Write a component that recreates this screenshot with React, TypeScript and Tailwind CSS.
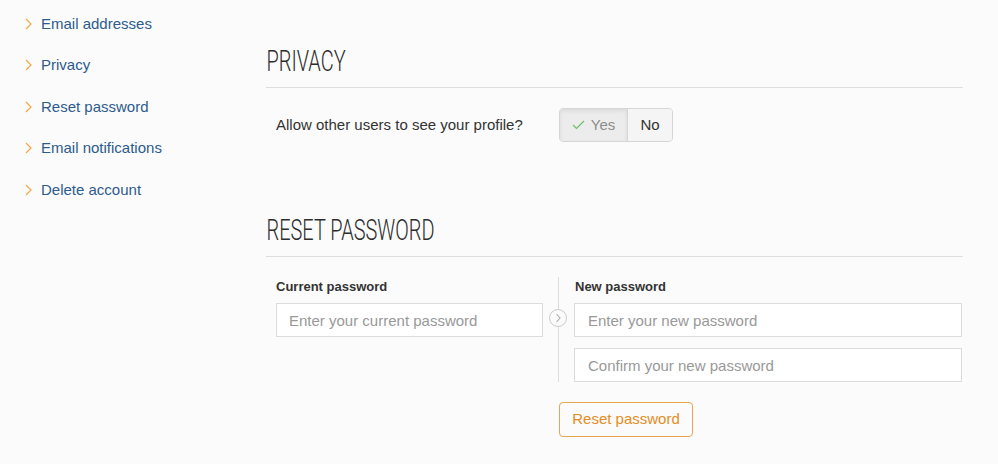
import React from "react";

const navItems = [
  "Email addresses",
  "Privacy",
  "Reset password",
  "Email notifications",
  "Delete account",
];

function Chevron({ className = "" }: { className?: string }) {
  return (
    <svg width="7" height="12" viewBox="0 0 7 12" className={className} fill="none">
      <polyline points="1,1 6,6 1,11" stroke="currentColor" strokeWidth="1.2" />
    </svg>
  );
}

function Heading({ children }: { children: React.ReactNode }) {
  return (
    <div className="border-b border-[#dedede] pb-[14px]">
      <h2
        className="block text-[30px] leading-[25px] h-[25px] font-light text-[#2e2e2e] uppercase whitespace-nowrap origin-left scale-x-[0.665] translate-x-[0.5px]"
        style={{ fontFamily: "Roboto, 'Liberation Sans', sans-serif" }}
      >
        {children}
      </h2>
    </div>
  );
}

export default function App() {
  return (
    <div
      className="min-h-[464px] w-[998px] bg-[#fbfbfb] flex text-[15px] text-[#333]"
      style={{ fontFamily: "'Liberation Sans', Arial, sans-serif" }}
    >
      <aside className="w-[266px] shrink-0 pl-[25px] pt-[13.5px]">
        <ul className="flex flex-col gap-[21.5px]">
          {navItems.map((n) => (
            <li key={n} className="flex items-center h-5 leading-5">
              <Chevron className="text-[#f0a848] mr-[9px]" />
              <a className="text-[#2d5c8c]">{n}</a>
            </li>
          ))}
        </ul>
      </aside>

      <main className="w-[697px] pt-[48px]">
        <Heading>Privacy</Heading>
        <div className="flex items-center mt-[20px] pl-[10px]">
          <span className="w-[283px]">Allow other users to see your profile?</span>
          <div className="flex h-[34px] rounded-[4px] border border-[#d6d6d6] overflow-hidden">
            <button className="w-[68px] flex items-center justify-center gap-[6px] bg-[#ececec] text-[#8c8c8c] shadow-[inset_0_2px_4px_rgba(0,0,0,0.08)] border-r border-[#d6d6d6]">
              <svg width="13" height="10" viewBox="0 0 13 10" fill="none">
                <polyline points="1,5 4.5,8.5 12,1" stroke="#6cbf6c" strokeWidth="1.2" />
              </svg>
              <span>Yes</span>
            </button>
            <button className="w-[44px] flex items-center justify-center bg-[#f5f5f5] text-[#333]">No</button>
          </div>
        </div>

        <div className="mt-[75px]">
          <Heading>Reset password</Heading>
        </div>

        <div className="pl-[10px] mt-[20px]">
          <div className="flex">
            <div className="w-[267px]">
              <label className="block text-[13px] font-bold leading-5 mb-[6px]">Current password</label>
              <input
                placeholder="Enter your current password"
                className="w-full h-[34px] border border-[#dcdcdc] bg-white px-[12px] text-[15px] placeholder-[#999] outline-none"
              />
            </div>
            <div className="w-[31px] relative flex justify-center">
              <div className="w-px bg-[#dedede] h-full" />
              <div className="absolute top-[32px] left-[6px] w-[18px] h-[18px] rounded-full border border-[#cccccc] bg-[#fbfbfb] flex items-center justify-center text-[#aaaaaa]">
                <svg width="8" height="10" viewBox="0 0 8 10" fill="none">
                  <polyline points="2.5,1 6,5 2.5,9" stroke="currentColor" strokeWidth="1.1" />
                </svg>
              </div>
            </div>
            <div className="w-[388px]">
              <label className="block text-[13px] font-bold leading-5 mb-[6px] pl-px">New password</label>
              <input
                placeholder="Enter your new password"
                className="block w-full h-[34px] border border-[#dcdcdc] bg-white px-[13px] text-[15px] placeholder-[#999] outline-none"
              />
              <input
                placeholder="Confirm your new password"
                className="block w-full h-[34px] mt-[11px] border border-[#dcdcdc] bg-white px-[13px] text-[15px] placeholder-[#999] outline-none"
              />
            </div>
          </div>
          <div className="pl-[283px] mt-[20px] pb-[26px]">
            <button className="h-[35px] w-[134px] rounded-[4px] border border-[#e9a550] text-[#e38d24] bg-transparent">
              Reset password
            </button>
          </div>
        </div>
      </main>
    </div>
  );
}
